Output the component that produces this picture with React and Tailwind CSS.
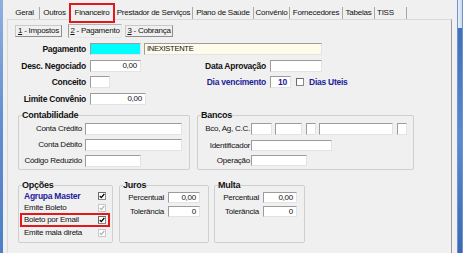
import React from "react";

// sunken Windows-style edit box
const edit = "border border-[#e3e3e3] border-t-[#9c9c9c] border-l-[#9c9c9c]";

function Edit({ className = "", children }) {
  return <div className={`${edit} flex h-[12px] shrink-0 items-center ${className}`}>{children}</div>;
}

function Check({ checked = false, disabled = false }) {
  return (
    <div
      className={`flex h-[8px] w-[8px] shrink-0 items-center justify-center border bg-white ${
        disabled ? "border-[#c8c8c8]" : "border-[#8a8a8a] border-t-[#6a6a6a] border-l-[#6a6a6a]"
      }`}
    >
      {checked && (
        <svg width="6" height="6" viewBox="0 0 6 6">
          <polyline
            points="0.8,3 2.3,4.6 5.3,1"
            fill="none"
            stroke={disabled ? "#b4b4b4" : "#000"}
            strokeWidth="1.3"
          />
        </svg>
      )}
    </div>
  );
}

const tabs = [
  ["Geral", "w-[30px] border-r"],
  ["Outros", "w-[29px]"],
];
const tabsAfter = [
  ["Prestador de Serviços", "w-[78px] border-r"],
  ["Plano de Saúde", "w-[61px] border-r"],
  ["Convênio", "w-[36px] border-r"],
  ["Fornecedores", "w-[53px] border-r"],
  ["Tabelas", "w-[32px] border-r"],
];

export default function App() {
  return (
    <div className="flex h-[253px] w-[468px] overflow-hidden bg-[#f0f0f0] font-['Liberation_Sans',Arial,sans-serif] text-[8px] leading-none tracking-[-0.25px] text-[#111]">
      <div className="w-[3px] bg-gradient-to-b from-[#8fb0de] via-[#5f8fd0] to-[#4d7fc8]" />

      <div className="flex w-[449px] flex-col">
        {/* tab strip */}
        <div className="relative z-10 flex h-[19px] items-start pl-[7px]">
          {tabs.map(([t, c]) => (
            <div key={t} className={`mt-[7px] flex h-[12px] items-center justify-center border-[#a8a8a8] ${c}`}>
              {t}
            </div>
          ))}
          <div className="mt-[3px] flex h-[20px] w-[46px] items-center justify-center border-2 border-[#e0191c] bg-[#f0f0f0]">
            Financeiro
          </div>
          {tabsAfter.map(([t, c]) => (
            <div key={t} className={`mt-[7px] flex h-[12px] items-center justify-center border-[#a8a8a8] ${c}`}>
              {t}
            </div>
          ))}
          <div className="mt-[7px] flex h-[12px] w-[32px] items-center border-r border-[#a8a8a8] pl-[2px]">TISS</div>
        </div>

        {/* tab page */}
        <div className="ml-[4px] flex flex-1 flex-col border-t border-l border-r border-[#dadada] border-r-[#9a9a9a]">
          {/* sub tabs */}
          <div className="mt-[4px] flex h-[14px] items-center pl-[7px]">
            <div className="flex h-[12px] w-[47px] items-center justify-center border border-[#c9c9c9] border-r-[#8e8e8e] border-b-[#8e8e8e]">
              <span className="underline">1</span>&nbsp;- Impostos
            </div>
            <div className="ml-[6px] flex h-[14px] w-[54px] items-center justify-center border border-[#e6e6e6] border-l-[#9a9a9a] border-t-[#b4b4b4]">
              <span className="underline">2</span>&nbsp;- Pagamento
            </div>
            <div className="ml-[3px] flex h-[12px] w-[48px] items-center justify-center border border-[#c9c9c9] border-r-[#8e8e8e] border-b-[#8e8e8e]">
              <span className="underline">3</span>&nbsp;- Cobrança
            </div>
          </div>

          {/* main fields */}
          <div className="mt-[5px] flex h-[12px] items-center">
            <div className="w-[78px] text-right text-[8.5px] font-bold">Pagamento</div>
            <Edit className="ml-[4px] w-[51px] bg-[#00ffff]" />
            <Edit className="ml-[3px] w-[178px] bg-[#fffbea] pl-[2px] text-[7.5px]">INEXISTENTE</Edit>
          </div>
          <div className="mt-[5px] flex h-[12px] items-center">
            <div className="w-[78px] text-right text-[8.5px] font-bold">Desc. Negociado</div>
            <Edit className="ml-[4px] w-[51px] justify-end bg-white pr-[3px]">0,00</Edit>
            <div className="ml-[55px] w-[70px] text-right text-[8.5px] font-bold">Data Aprovação</div>
            <Edit className="ml-[4px] w-[52px] bg-white" />
          </div>
          <div className="mt-[4px] flex h-[12px] items-center">
            <div className="w-[78px] text-right text-[8.5px] font-bold">Conceito</div>
            <Edit className="ml-[4px] w-[20px] bg-white" />
            <div className="ml-[86px] w-[70px] text-right text-[8.5px] font-bold text-[#1c1c9a]">Dia vencimento</div>
            <Edit className="ml-[4px] w-[21px] justify-end bg-white pr-[3px] text-[8.5px] font-bold text-[#1c1c9a]">10</Edit>
            <div className="ml-[5px]">
              <Check />
            </div>
            <div className="ml-[5px] text-[8.5px] font-bold text-[#1c1c9a]">Dias Uteis</div>
          </div>
          <div className="mt-[5px] flex h-[12px] items-center">
            <div className="w-[78px] text-right text-[8.5px] font-bold">Limite Convênio</div>
            <Edit className="ml-[4px] w-[56px] justify-end bg-white pr-[3px]">0,00</Edit>
          </div>

          {/* Contabilidade / Bancos */}
          <div className="mt-[6px] flex items-start">
            <fieldset className="ml-[10px] h-[59px] w-[172px] rounded-[2px] border border-[#cfcfcf]">
              <legend className="ml-[3px] text-[9px] font-bold leading-[9px]">Contabilidade</legend>
              <div className="mt-[3px] flex h-[12px] items-center">
                <div className="w-[63px] text-right">Conta Crédito</div>
                <Edit className="ml-[3px] w-[97px] bg-white" />
              </div>
              <div className="mt-[4px] flex h-[12px] items-center">
                <div className="w-[63px] text-right">Conta Débito</div>
                <Edit className="ml-[3px] w-[97px] bg-white" />
              </div>
              <div className="mt-[4px] flex h-[12px] items-center">
                <div className="w-[63px] text-right">Código Reduzido</div>
                <Edit className="ml-[3px] w-[56px] bg-white" />
              </div>
            </fieldset>
            <fieldset className="ml-[7px] h-[59px] w-[217px] rounded-[2px] border border-[#cfcfcf]">
              <legend className="ml-[3px] text-[9px] font-bold leading-[9px]">Bancos</legend>
              <div className="mt-[3px] flex h-[12px] items-center">
                <div className="w-[52px] text-right">Bco, Ag, C.C.</div>
                <Edit className="ml-[1px] w-[21px] bg-white" />
                <Edit className="ml-[3px] w-[27px] bg-white" />
                <Edit className="ml-[4px] w-[10px] bg-white" />
                <Edit className="ml-[3px] w-[74px] bg-white" />
                <Edit className="ml-[4px] w-[10px] bg-white" />
              </div>
              <div className="mt-[5px] flex h-[11px] items-center">
                <div className="w-[52px] text-right">Identificador</div>
                <Edit className="ml-[1px] !h-[11px] w-[81px] bg-white" />
              </div>
              <div className="mt-[4px] flex h-[11px] items-center">
                <div className="w-[52px] text-right">Operação</div>
                <Edit className="ml-[1px] !h-[11px] w-[56px] bg-white" />
              </div>
            </fieldset>
          </div>

          {/* Opções / Juros / Multa */}
          <div className="mt-[11px] flex items-start">
            <fieldset className="ml-[10px] h-[62px] w-[95px] rounded-[2px] border border-[#cfcfcf]">
              <legend className="ml-[3px] text-[9px] font-bold leading-[9px]">Opções</legend>
              <div className="flex h-[12px] items-center pl-[5px]">
                <div className="w-[74px] text-[8.5px] font-bold text-[#1c1c9a]">Agrupa Master</div>
                <Check checked />
              </div>
              <div className="flex h-[11px] items-center pl-[5px]">
                <div className="w-[74px]">Emite Boleto</div>
                <Check checked disabled />
              </div>
              <div className="ml-[1px] flex h-[14px] w-[90px] items-center border-2 border-[#e0191c] pl-[2px]">
                <div className="w-[74px]">Boleto por Email</div>
                <Check checked />
              </div>
              <div className="flex h-[12px] items-center pl-[5px]">
                <div className="w-[74px]">Emite mala direta</div>
                <Check checked disabled />
              </div>
            </fieldset>
            <fieldset className="ml-[6px] h-[62px] w-[90px] rounded-[2px] border border-[#cfcfcf]">
              <legend className="ml-[3px] text-[9px] font-bold leading-[9px]">Juros</legend>
              <div className="mt-[2px] flex h-[11px] items-center">
                <div className="w-[44px] text-right">Percentual</div>
                <Edit className="ml-[4px] !h-[11px] w-[32px] justify-end bg-white pr-[3px]">0,00</Edit>
              </div>
              <div className="mt-[3px] flex h-[11px] items-center">
                <div className="w-[44px] text-right">Tolerância</div>
                <Edit className="ml-[4px] !h-[11px] w-[32px] justify-end bg-white pr-[3px]">0</Edit>
              </div>
            </fieldset>
            <fieldset className="ml-[5px] h-[62px] w-[91px] rounded-[2px] border border-[#cfcfcf]">
              <legend className="ml-[3px] text-[9px] font-bold leading-[9px]">Multa</legend>
              <div className="mt-[2px] flex h-[11px] items-center">
                <div className="w-[44px] text-right">Percentual</div>
                <Edit className="ml-[4px] !h-[11px] w-[34px] justify-end bg-white pr-[3px]">0,00</Edit>
              </div>
              <div className="mt-[3px] flex h-[11px] items-center">
                <div className="w-[44px] text-right">Tolerância</div>
                <Edit className="ml-[4px] !h-[11px] w-[34px] justify-end bg-white pr-[3px]">0</Edit>
              </div>
            </fieldset>
          </div>
        </div>
      </div>

      <div className="w-[5px]" />
      <div className="flex w-[6px] flex-col border-x border-[#6f93cc]">
        <div className="h-[28px] bg-gradient-to-r from-[#e9f0fa] to-[#c9d9f0]" />
        <div className="flex-1 bg-gradient-to-b from-[#3f6fbd] via-[#5a8ad2] to-[#3a68b5]" />
      </div>
      <div className="w-[5px] bg-white" />
    </div>
  );
}
